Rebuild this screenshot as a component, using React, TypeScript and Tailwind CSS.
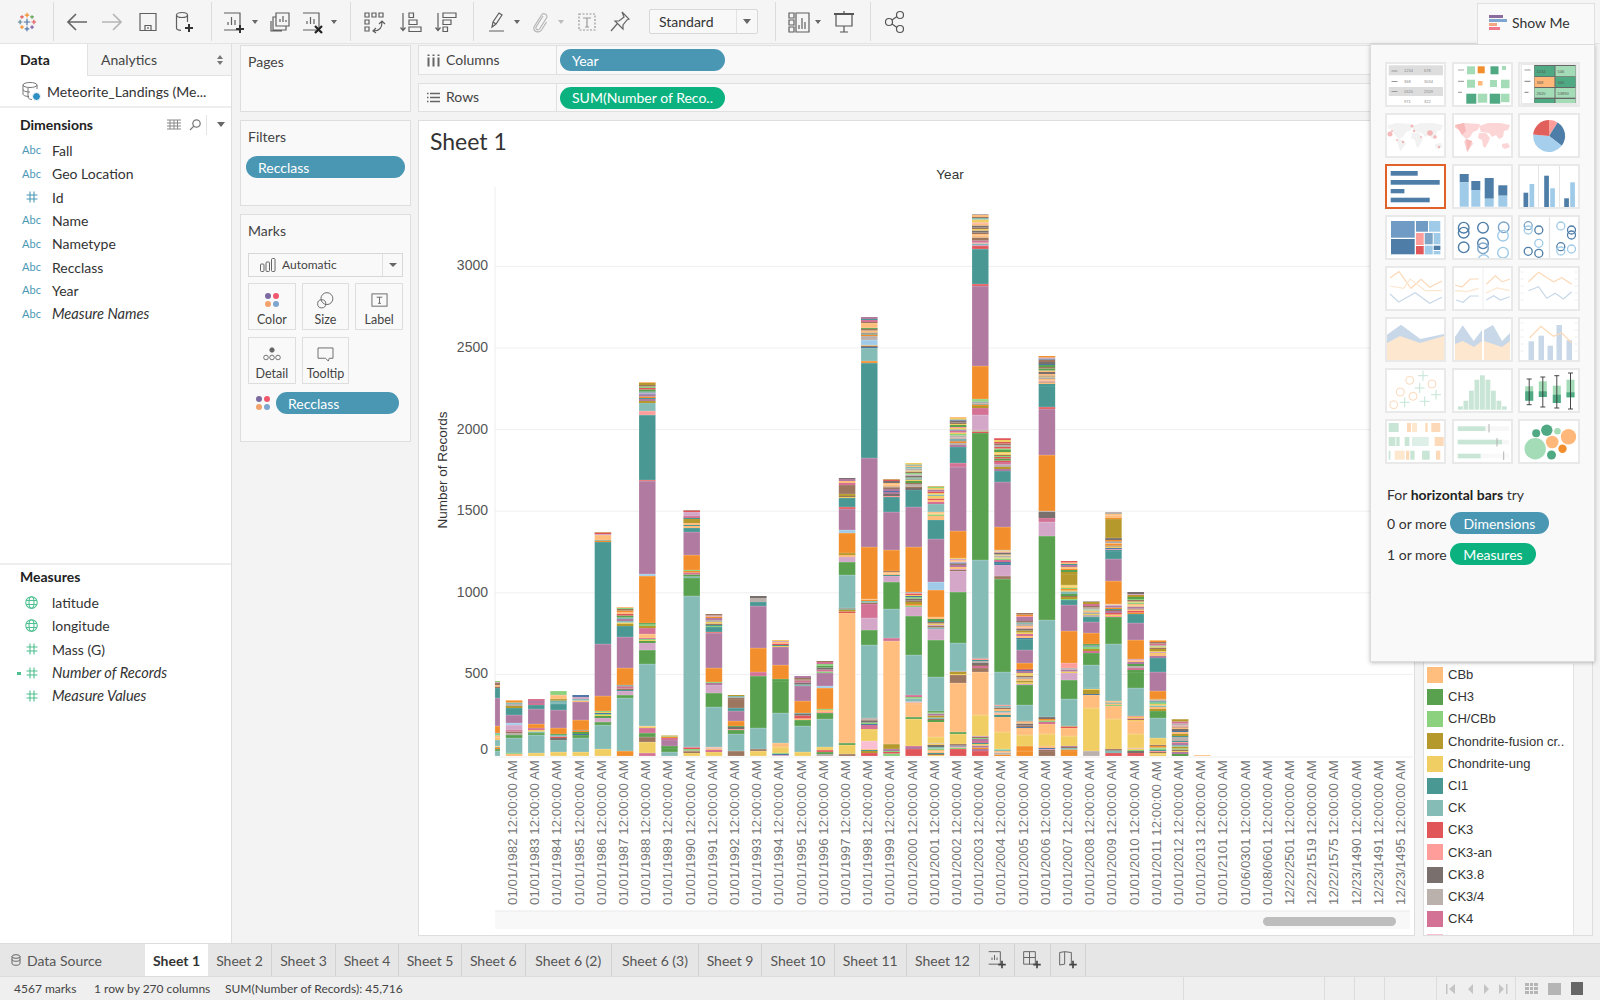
import type { ReactNode } from "react";

const COLORS: Record<string, string> = {
  T: "#499894", K: "#86bcb6", O: "#f28e2b", P: "#b07aa1", G: "#59a14f", L: "#ffbe7d", Y: "#f1ce63",
  B: "#9d7660", M: "#d37295", H: "#d4a6c8", R: "#e15759", S: "#ff9d9a", V: "#b6992d", N: "#8cd17d",
  A: "#a0cbe8", D: "#4e79a7", W: "#79706e", Q: "#bab0ac", I: "#fabfd2",
};
const NOISE = "YLGBRMDNQTOVSKPHYLNBW";

// one bar per column, bottom to top: colour key + height in px, x = thin mixed stripes
const BARS = [
  "K5 G2 x2 Y1 K6 x7 O7 P28 T10 x7",
  "x3 K15 G3 x5 H5 A2 P8 T7 x8",
  "Y3 K18 G2 x5 O4 P15 T4 x6",
  "Y4 K12 x6 O6 P18 T6 x5 L4 N4",
  "Y4 K14 G3 x5 O10 P18 x7",
  "Y7 K24 G3 H4 x7 O15 P52 T102 x2 L5 x3",
  "O5 K53 G3 H4 x6 O17 P31 T11 x19",
  "M3 Y11 B5 G4 M5 x2 K62 G14 H7 x5 L4 M6 x5 O47 A2 P93 R1 T65 S4 K8 x21",
  "K4 G4 x2 P6 x5",
  "Y3 x6 K151 G18 x8 O15 P23 T4 x12 H4 x2",
  "Y4 x5 K40 G14 H8 x3 O14 P35 R1 T5 x13",
  "B5 K17 G4 x4 O5 P10 T3 B9 x4",
  "Y5 B2 K21 G52 M4 O24 P42 T4 x6",
  "x3 Y6 L4 K30 G32 x2 O14 P18 x7",
  "Y4 K26 G6 x7 O12 P15 x10",
  "x4 R2 Y3 K28 G6 x4 O21 A2 P13 x12",
  "B2 Y9 G2 L130 x5 K33 G13 H5 x4 O20 A3 P21 R2 T9 x4 B9 x7",
  "R3 x4 I8 Y11 x12 K73 G15 H12 M14 x5 O52 P89 T95 O2 K13 x3 A5 Q4 x8 L5 x6",
  "x7 V5 L103 M3 K29 G27 H6 x5 O21 P38 T15 x18",
  "R7 x3 Y27 G2 L13 x9 K40 G39 H9 x15 O45 P40 T17 x27",
  "x13 Y6 L15 x11 K34 G37 H11 x12 O27 A8 P43 T19 x8 K8 x18",
  "R7 x5 Y10 G2 L49 B8 x4 K28 G51 H21 x13 O27 P64 M4 T16 x30",
  "R5 x15 Y21 L43 B4 x10 K98 G127 x3 H15 M7 x7 N2 O33 P80 R2 T35 R3 x32",
  "x7 Y17 L15 x12 K33 G93 B3 H11 x15 O23 P45 T11 x33",
  "O5 O5 Y11 L5 x9 K16 G20 x16 O6 P13 T11 x26",
  "B5 x5 Y12 L10 x7 K97 G84 H14 M4 x7 O56 P46 R2 T21 x30",
  "O5 x5 Y10 L8 x2 K27 G19 H7 x5 S5 O32 P26 T5 x15 V11 x13",
  "Q5 Y43 L13 x7 K23 G12 x9 O11 P11 T5 x16",
  "R3 x4 Y30 L13 x5 K57 G27 x13 O23 P22 T8 x13 V19 x7",
  "R3 x5 Y14 L13 x5 K28 G16 x13 O19 P17 T9 x22",
  "x11 Y7 K20 G7 x12 O8 P19 T14 x18",
  "x37",
  "L1",
];

const COLUMN_LABELS = [
  ...Array.from({ length: 32 }, (_, i) => `01/01/${1982 + i}`),
  "01/01/2101", "01/06/0301", "01/08/0601", "12/22/2501", "12/22/1519", "12/22/1575", "12/23/1490", "12/23/1491", "12/23/1495",
];

function Bar({ spec, index }: { spec: string; index: number }) {
  // first entry is the column cut off by the left edge of the scrolled view
  const x = index === 0 ? 495 : 505.8 + 22.2 * (index - 1);
  const w = index === 0 ? 5 : 16.6;
  let y = 756;
  let seed = index * 37 + 11;
  const rects: ReactNode[] = [];
  spec.split(" ").forEach((tok, t) => {
    const key = tok[0];
    const h = Number(tok.slice(1));
    if (key === "x") {
      let left = h;
      let n = 0;
      while (left > 0) {
        seed = (seed * 7919 + 13) % 10007;
        const sh = Math.min(left, 1 + (seed % 3) * 0.5);
        y -= sh;
        left -= sh;
        rects.push(<rect key={`${t}-${n++}`} x={x} y={y} width={w} height={sh} fill={COLORS[NOISE[seed % NOISE.length]]} />);
      }
    } else {
      y -= h;
      rects.push(<rect key={t} x={x} y={y} width={w} height={h} fill={COLORS[key]} stroke="#fff" strokeOpacity={0.35} strokeWidth={0.5} />);
    }
  });
  return <g>{rects}</g>;
}

function Chart() {
  const ticks = [0, 500, 1000, 1500, 2000, 2500, 3000];
  return (
    <svg viewBox="419 121 995 814" className="w-[995px] h-[814px] block absolute left-0 top-0">
      <text x="950" y="179" textAnchor="middle" fontSize="13.5" fill="#333" fontFamily="Liberation Sans, sans-serif">Year</text>
      <line x1="495" y1="187" x2="495" y2="756" stroke="#eeeeee" />
      {ticks.map((t) => {
        const y = 756 - t * 0.1632;
        return (
          <g key={t}>
            {t > 0 && <line x1="495" y1={y} x2="1413" y2={y} stroke="#efefef" />}
            <text x="488" y={y + 4 - (t === 0 ? 6 : 0)} textAnchor="end" fontSize="14" fill="#555" fontFamily="Liberation Sans, sans-serif">{t}</text>
          </g>
        );
      })}
      <text transform="rotate(-90 447 470)" x="447" y="470" textAnchor="middle" fontSize="13.5" fill="#333" fontFamily="Liberation Sans, sans-serif">Number of Records</text>
      {BARS.map((spec, i) => <Bar key={i} spec={spec} index={i} />)}
      <line x1="495" y1="757" x2="1413" y2="757" stroke="#eeeeee" />
      {COLUMN_LABELS.map((label, i) => {
        const x = 517 + 22.2 * i;
        return (
          <text key={i} transform={`rotate(-90 ${x} 905)`} x={x} y="905" fontSize="13.3" fill="#777" fontFamily="Liberation Sans, sans-serif">
            {label} 12:00:00 AM
          </text>
        );
      })}
      <rect x="495" y="911" width="915" height="18" fill="#f8f8f8" />
      <line x1="495" y1="911" x2="1410" y2="911" stroke="#eaeaea" />
      <rect x="1263" y="917" width="133" height="9" rx="4.5" fill="#bdbdbd" />
    </svg>
  );
}

function Ico({ children, className = "w-[24px] h-[24px]", stroke = "#5f5f5f" }: { children: ReactNode; className?: string; stroke?: string }) {
  return (
    <svg viewBox="0 0 24 24" className={`${className} block shrink-0`} fill="none" stroke={stroke} strokeWidth="1.2">
      {children}
    </svg>
  );
}

function Sep({ className }: { className: string }) {
  return <div className={`w-px h-[39px] bg-[#dcdcdc] shrink-0 ${className}`} />;
}

function Caret({ className }: { className: string }) {
  return (
    <div className={`w-[10px] flex justify-center shrink-0 ${className}`}>
      <div className="w-0 h-0 border-l-[3.5px] border-r-[3.5px] border-t-[4px] border-l-transparent border-r-transparent border-t-[#666]" />
    </div>
  );
}

function Logo() {
  const crosses: [number, number, string, number][] = [
    [12, 12, "#4e79a7", 3.5], [12, 4.5, "#f28e2b", 2.5], [12, 19.5, "#4e79a7", 2.5], [4.5, 12, "#59879b", 2.5], [19.5, 12, "#e15759", 2.5],
    [6.5, 6.5, "#e15759", 2], [17.5, 6.5, "#59a14f", 2], [6.5, 17.5, "#f28e2b", 2], [17.5, 17.5, "#7b5ea7", 2],
  ];
  return (
    <svg viewBox="0 0 24 24" className="w-[22px] h-[22px] block">
      {crosses.map(([x, y, c, r], i) => (
        <path key={i} d={`M${x - r} ${y}H${x + r}M${x} ${y - r}V${y + r}`} stroke={c} strokeWidth="1.3" />
      ))}
    </svg>
  );
}

function Toolbar() {
  return (
    <div className="h-[44px] shrink-0 flex items-center bg-[#f5f5f5] border-b border-[#e4e4e4] relative">
      <div className="w-[53px] flex justify-center shrink-0"><Logo /></div>
      <Sep className="" />
      <div className="ml-[11px]"><Ico stroke="#666"><path strokeWidth="1.7" d="M22 12H3M11 4l-8 8 8 8" /></Ico></div>
      <div className="ml-[11px]"><Ico stroke="#b5b5b5"><path strokeWidth="1.7" d="M2 12h19M13 4l8 8-8 8" /></Ico></div>
      <div className="ml-[12px]"><Ico><path d="M4 3.5h16v17H4zM9 20.5v-5h6v5M12 17v2" /></Ico></div>
      <div className="ml-[12px]"><Ico><ellipse cx="10" cy="5" rx="5.5" ry="2.5" /><path d="M4.5 5v13c0 1.2 2 2.2 4.5 2.4M15.500 5v7" /><path stroke="#333" strokeWidth="2" d="M17 14v8M13 18h8" /></Ico></div>
      <Sep className="ml-[15px]" />
      <div className="ml-[9px]"><Ico><path d="M3 3h16v17H3M7 15v-3M10.500 15V7M14 15v-5" /><path stroke="#333" strokeWidth="2" d="M19 15v8M15 19h8" /></Ico></div>
      <Caret className="ml-[5px]" />
      <div className="ml-[8px]"><Ico><path d="M8 3h13v13H8zM12 12V9M15 12V6M18 12v-2M8 7H5v13h13v-4M3 11v10h11" /></Ico></div>
      <div className="ml-[8px]"><Ico><path d="M3 3h16v17H3M7 14v-3M10.500 14V7M14 14v-5" /><path stroke="#222" strokeWidth="2.2" d="M15 16l7 7M22 16l-7 7" /></Ico></div>
      <Caret className="ml-[5px]" />
      <Sep className="ml-[11px]" />
      <div className="ml-[11px]"><Ico><path d="M3 3h4v4H3zM10 3h4v4h-4zM17 3h4v4h-4zM3 10h4v4H3zM3 17h4v4H3zM12 21c5 0 8-3 8-9M17 14l3-3 3 3M14 18l-3 3 3 2" /></Ico></div>
      <div className="ml-[13px]"><Ico><path d="M4 3v17M1.500 17.500L4 20.500l2.500-3M10 3h4.500v4.500H10zM10 10h8v4.500h-8zM10 17h12v4.500H10z" /></Ico></div>
      <div className="ml-[11px]"><Ico><path d="M4 3v17M1.500 17.500L4 20.500l2.500-3M9 3h13v4.500H9zM9 10h8v4.500H9zM9 17h4.500v4.500H9z" /></Ico></div>
      <Sep className="ml-[15px]" />
      <div className="ml-[11px]"><Ico><path d="M7 17l1-5 6-9 3 2-6 9-4 3zM8 12l3 2M4 21h15" /></Ico></div>
      <Caret className="ml-[3px]" />
      <div className="ml-[6px]"><Ico stroke="#b5b5b5"><path d="M15 6l-7 11c-1 2 2 4 3.500 2l7-11c2-3-3-6-5-3l-7 11c-3 5 4 8 7 4l5-8" /></Ico></div>
      <Caret className="ml-[4px] opacity-40" />
      <div className="ml-[9px]"><Ico stroke="#999"><path strokeDasharray="2 1.500" d="M4 4h16v16H4z" /><path d="M8 8h8M12 8v9M10 17h4" /></Ico></div>
      <div className="ml-[9px]"><Ico stroke="#666"><path d="M14 2l7 7-2 1-4 5 0 4-8-8 4 0 5-4zM9 14l-6 7" /></Ico></div>
      <div className="ml-[17px] w-[109px] h-[25px] shrink-0 flex items-center bg-[#f8f8f8] border border-[#d8d8d8] rounded-[2px]">
        <span className="pl-[9px] flex-1 text-[14px] text-[#333]">Standard</span>
        <div className="w-[21px] h-full border-l border-[#e2e2e2] flex items-center justify-center">
          <div className="w-0 h-0 border-l-[4px] border-r-[4px] border-t-[5px] border-l-transparent border-r-transparent border-t-[#666]" />
        </div>
      </div>
      <Sep className="ml-[17px]" />
      <div className="ml-[11px]"><Ico><path d="M2 3h5v5H2zM2 10h5v5H2zM2 17h5v5H2zM9 3h13v19H9zM12 19v-4M15 19V8M18 19v-7" /></Ico></div>
      <Caret className="ml-[2px]" />
      <div className="ml-[9px]"><Ico stroke="#555"><path strokeWidth="2" d="M2 4h20" /><path d="M4 4v12h16V4M12 1v3M12 16v6M8 22h8" /></Ico></div>
      <Sep className="ml-[14px]" />
      <div className="ml-[12px]"><Ico stroke="#555"><circle cx="6" cy="12" r="3.5" /><circle cx="17" cy="5" r="3.5" /><circle cx="17" cy="19" r="3.5" /><path d="M9 10l5-3.500M9 14l5 3.500" /></Ico></div>
      <div className="ml-auto mr-[5px] w-[118px] h-[41px] self-end -mb-px z-20 flex items-center bg-[#f9f9f9] border border-[#e0e0e0] border-b-0 pl-[11px] pb-[4px]">
        <div className="flex flex-col w-[18px] shrink-0">
          <div className="h-[3px] w-[14px] bg-[#8a6d9e]" />
          <div className="h-[3px] mt-px w-[18px] bg-[#7ea6d0]" />
          <div className="h-[3px] mt-px w-[8px] bg-[#f4a582]" />
          <div className="h-[3px] mt-px w-[11px] bg-[#f0788a]" />
        </div>
        <span className="ml-[5px] text-[14px] text-[#333]">Show Me</span>
      </div>
    </div>
  );
}

function HashIcon({ color }: { color: string }) {
  return (
    <svg viewBox="0 0 12 12" className="w-[12px] h-[12px] block">
      <path d="M4 0.500V11.500M8 0.500V11.500M0.500 4H11.500M0.500 8H11.500" stroke={color} strokeWidth="1.1" fill="none" />
    </svg>
  );
}

function GlobeIcon() {
  return (
    <svg viewBox="0 0 12 12" className="w-[13px] h-[13px] block" fill="none" stroke="#4ebf90" strokeWidth="1">
      <circle cx="6" cy="6" r="5.300" />
      <ellipse cx="6" cy="6" rx="2.300" ry="5.300" />
      <path d="M1 4.200h10M1 7.800h10" />
    </svg>
  );
}

function Field({ icon, label, italic }: { icon: ReactNode; label: string; italic?: boolean }) {
  return (
    <div className="h-[23.330px] flex items-center">
      <div className="w-[52px] pl-[23px] pr-[12px] flex justify-center shrink-0">{icon}</div>
      <span className={`text-[#333] ${italic ? "italic text-[14.600px]" : "text-[14px]"}`}>{label}</span>
    </div>
  );
}

function DataPane() {
  const abc = <span className="text-[11px] text-[#4a97b4]">Abc</span>;
  const dimHash = <HashIcon color="#4a97b4" />;
  const green = <HashIcon color="#4ebf90" />;
  return (
    <div className="w-[232px] shrink-0 bg-white border-r border-[#dedede] flex flex-col">
      <div className="h-[32px] flex shrink-0">
        <div className="w-[87px] flex items-center pl-[20px] pb-[2px] text-[14px] font-bold text-[#222]">Data</div>
        <div className="flex-1 flex items-center justify-between bg-[#f5f5f5] border-l border-b border-[#e2e2e2] pl-[13px] pr-[8px] text-[14px] text-[#444]">
          Analytics
          <span className="flex flex-col gap-[2px]">
            <span className="w-0 h-0 border-l-[3px] border-r-[3px] border-b-[4px] border-l-transparent border-r-transparent border-b-[#777]" />
            <span className="w-0 h-0 border-l-[3px] border-r-[3px] border-t-[4px] border-l-transparent border-r-transparent border-t-[#777]" />
          </span>
        </div>
      </div>
      <div className="h-[32px] shrink-0 flex items-center border-b-2 border-[#eeeeee] pl-[21px]">
        <div className="relative w-[20px] h-[20px] shrink-0">
          <svg viewBox="0 0 20 20" className="w-[20px] h-[20px] block" fill="none" stroke="#777" strokeWidth="1">
            <ellipse cx="9" cy="4" rx="7" ry="2.500" />
            <path d="M2 4v9c0 1.500 3 2.500 6 2.500M16 4v4M2 8.500c0 1.500 3 2.500 7 2.500M7 7v9c0 1.500 2 2.500 4 2.500" />
          </svg>
          <div className="absolute right-0 bottom-0 w-[9px] h-[9px] rounded-full bg-[#2f8fc2] border border-white" />
        </div>
        <span className="ml-[6px] text-[14px] text-[#333] whitespace-nowrap">Meteorite_Landings (Me...</span>
      </div>
      <div className="flex-1 flex flex-col min-h-0">
        <div className="h-[31px] pt-[2px] shrink-0 flex items-center pl-[20px]">
          <span className="text-[14px] font-bold text-[#222]">Dimensions</span>
          <svg viewBox="0 0 14 11" className="w-[14px] h-[11px] block ml-auto" fill="none" stroke="#888" strokeWidth="1">
            <path d="M0 1h14M0 4h14M0 7h14M0 10h14M3 1v9M7 1v9M10.500 1v9" />
          </svg>
          <svg viewBox="0 0 12 12" className="w-[12px] h-[12px] block ml-[8px]" fill="none" stroke="#777" strokeWidth="1.200">
            <circle cx="7.500" cy="4.500" r="3.700" /><path d="M4.800 7.200L1 11" />
          </svg>
          <div className="w-px h-[20px] bg-[#e4e4e4] ml-[5px]" />
          <div className="ml-[10px] mr-[6px] w-0 h-0 border-l-[4px] border-r-[4px] border-t-[5px] border-l-transparent border-r-transparent border-t-[#666]" />
        </div>
        <Field icon={abc} label="Fall" />
        <Field icon={abc} label="Geo Location" />
        <Field icon={dimHash} label="Id" />
        <Field icon={abc} label="Name" />
        <Field icon={abc} label="Nametype" />
        <Field icon={abc} label="Recclass" />
        <Field icon={abc} label="Year" />
        <Field icon={abc} label="Measure Names" italic />
      </div>
      <div className="h-[380px] shrink-0 border-t-2 border-[#eeeeee]">
        <div className="h-[26px] pb-[4px] flex items-center pl-[20px] text-[14px] font-bold text-[#222]">Measures</div>
        <Field icon={<GlobeIcon />} label="latitude" />
        <Field icon={<GlobeIcon />} label="longitude" />
        <Field icon={green} label="Mass (G)" />
        <Field icon={<div className="relative"><div className="absolute -left-[9px] top-[5px] w-[4px] border-t-2 border-b border-[#4ebf90] h-[3px]" />{green}</div>} label="Number of Records" italic />
        <Field icon={green} label="Measure Values" italic />
      </div>
    </div>
  );
}

function Pill({ label, className }: { label: string; className: string }) {
  return <div className={`h-[22px] rounded-[11px] flex items-center text-[14px] text-white whitespace-nowrap ${className}`}>{label}</div>;
}

function ColorDots({ size }: { size: string }) {
  return (
    <div className={`grid grid-cols-2 gap-[1.500px] ${size}`}>
      <div className="rounded-full bg-[#7b6aa0]" />
      <div className="rounded-full bg-[#f0586e]" />
      <div className="rounded-full bg-[#f2a36b]" />
      <div className="rounded-full bg-[#7ea6d0]" />
    </div>
  );
}

function MarkButton({ icon, label }: { icon: ReactNode; label: string }) {
  return (
    <div className="h-[47px] border border-[#dedede] bg-[#f9f9f9] flex flex-col items-center justify-between pt-[7px] pb-[2px] text-[12.500px] leading-[14px] text-[#444]">
      <div className="h-[18px] flex items-center">{icon}</div>
      <span>{label}</span>
    </div>
  );
}

function CardsColumn() {
  return (
    <div className="w-[171px] ml-[8px] shrink-0 flex flex-col gap-[8px] pt-px">
      <div className="h-[67px] border border-[#dedede] bg-[#f9f9f9] pl-[7px] pt-[5px] text-[14px] text-[#444]">Pages</div>
      <div className="h-[86px] border border-[#dedede] bg-[#f9f9f9] text-[14px] text-[#444]">
        <div className="pl-[7px] pt-[5px]">Filters</div>
        <Pill label="Recclass" className="mt-[9px] mx-[5px] pl-[12px] bg-[#4a97b4]" />
      </div>
      <div className="h-[228px] border border-[#dedede] bg-[#f9f9f9] text-[14px] text-[#444] px-[7px]">
        <div className="pt-[5px]">Marks</div>
        <div className="mt-[12px] h-[24px] border border-[#d8d8d8] flex items-center bg-[#f9f9f9]">
          <svg viewBox="0 0 16 14" className="w-[16px] h-[14px] block ml-[11px]" fill="none" stroke="#666" strokeWidth="1">
            <rect x="0.500" y="6" width="3.500" height="7.500" rx="1" /><rect x="6" y="4" width="3.500" height="9.500" rx="1" /><rect x="11.500" y="0.500" width="3.500" height="13" rx="1" />
          </svg>
          <span className="ml-[6px] text-[12px] text-[#444] flex-1">Automatic</span>
          <div className="w-[20px] h-full border-l border-[#e0e0e0] flex items-center justify-center">
            <div className="w-0 h-0 border-l-[4px] border-r-[4px] border-t-[4px] border-l-transparent border-r-transparent border-t-[#666]" />
          </div>
        </div>
        <div className="mt-[6px] grid grid-cols-3 gap-x-[6px] gap-y-[7px]">
          <MarkButton icon={<ColorDots size="w-[14px] h-[14px]" />} label="Color" />
          <MarkButton
            icon={<svg viewBox="0 0 18 18" className="w-[17px] h-[17px] block" fill="none" stroke="#666" strokeWidth="1"><circle cx="10.500" cy="7" r="6.300" /><circle cx="5" cy="12.500" r="4.300" /></svg>}
            label="Size"
          />
          <MarkButton
            icon={<svg viewBox="0 0 18 18" className="w-[17px] h-[17px] block" fill="none" stroke="#666" strokeWidth="1"><rect x="1" y="2" width="16" height="13" /><path d="M6 5.500h6M9 5.500v6.500M7.500 12h3" /></svg>}
            label="Label"
          />
          <MarkButton
            icon={<svg viewBox="0 0 18 14" className="w-[18px] h-[14px] block" fill="none" stroke="#666" strokeWidth="0.900"><circle cx="9" cy="3" r="2.200" fill="#666" /><circle cx="3" cy="10.500" r="2.300" /><circle cx="9" cy="10.500" r="2.300" /><circle cx="15" cy="10.500" r="2.300" /></svg>}
            label="Detail"
          />
          <MarkButton
            icon={<svg viewBox="0 0 18 16" className="w-[17px] h-[15px] block" fill="none" stroke="#666" strokeWidth="1"><path d="M1 1h16v11h-4l-1 3-3-3H1z" /></svg>}
            label="Tooltip"
          />
        </div>
        <div className="mt-[8px] flex items-center pl-[8px]">
          <ColorDots size="w-[14px] h-[14px]" />
          <Pill label="Recclass" className="ml-[6px] w-[123px] pl-[12px] bg-[#4a97b4]" />
        </div>
      </div>
    </div>
  );
}

function Legend() {
  const rows: [string, string][] = [
    ["CBb", "#ffbe7d"], ["CH3", "#59a14f"], ["CH/CBb", "#8cd17d"], ["Chondrite-fusion cr..", "#b6992d"], ["Chondrite-ung", "#f1ce63"],
    ["CI1", "#499894"], ["CK", "#86bcb6"], ["CK3", "#e15759"], ["CK3-an", "#ff9d9a"], ["CK3.8", "#79706e"], ["CK3/4", "#bab0ac"], ["CK4", "#d37295"],
  ];
  return (
    <div className="w-[170px] shrink-0 border border-[#dedede] bg-[#f6f6f6] flex justify-end flex-col overflow-hidden font-['Liberation_Sans',sans-serif]">
      <div className="w-[150px] bg-white border-r border-[#e4e4e4] pl-[3px] -mb-[2px]">
        {rows.map(([name, c]) => (
          <div key={name} className="h-[22.200px] flex items-center text-[13px] text-[#333] whitespace-nowrap">
            <LegendSwatch color={c} />
            <span className="ml-[5px]">{name}</span>
          </div>
        ))}
        <div className="mt-[4px] w-[16px] h-[3px] bg-[#fabfd2]" />
      </div>
    </div>
  );
}

function LegendSwatch({ color }: { color: string }) {
  return (
    <svg viewBox="0 0 16 16" className="w-[16px] h-[16px] block shrink-0">
      <rect width="16" height="16" fill={color} />
    </svg>
  );
}

function Shelf({ icon, label, pill, className }: { icon: ReactNode; label: string; pill: string; className: string }) {
  return (
    <div className={`flex items-stretch bg-[#f9f9f9] border border-[#e0e0e0] ${className}`}>
      <div className="w-[138px] shrink-0 border-r border-[#e0e0e0] flex items-center pl-[8px] text-[14px] text-[#444]">
        <div className="w-[19px]">{icon}</div>
        <span className="pb-[2px]">{label}</span>
      </div>
      <div className="flex items-center pl-[3px]">{pill === "Year"
        ? <Pill label="Year" className="w-[165px] pl-[12px] bg-[#4a97b4]" />
        : <Pill label={pill} className="w-[165px] pl-[12px] bg-[#0bb27f]" />}</div>
    </div>
  );
}

function Center() {
  return (
    <div className="w-[1175px] ml-[7px] shrink-0 flex flex-col gap-[8px] pt-px">
      <Shelf
        className="h-[30px]"
        label="Columns"
        pill="Year"
        icon={<svg viewBox="0 0 13 13" className="w-[13px] h-[13px] block"><path d="M1.500 3.500V12.500M6.500 3.500V12.500M11.500 3.500V12.500" stroke="#666" strokeWidth="2" /><path d="M1.500 0.500v1.500M6.500 0.500v1.500M11.500 0.500v1.500" stroke="#666" strokeWidth="2" /></svg>}
      />
      <Shelf
        className="h-[29px]"
        label="Rows"
        pill="SUM(Number of Reco.."
        icon={<svg viewBox="0 0 13 13" className="w-[13px] h-[13px] block"><path d="M3 2.500H13M3 6.500H13M3 10.500H13M0 2.500h1.500M0 6.500h1.500M0 10.500h1.500" stroke="#666" strokeWidth="1.500" /></svg>}
      />
      <div className="h-[816px] flex gap-[8px]">
        <div className="w-[997px] shrink-0 relative bg-white border border-[#dedede] overflow-hidden">
          <div className="pl-[11px] pt-[4px] text-[23px] leading-[32px] text-[#333] relative z-10">Sheet 1</div>
          <Chart />
        </div>
        <Legend />
      </div>
    </div>
  );
}

/* ---------- Show Me thumbnails, coords in a 61x45 box ---------- */
const DK = "#4fa983";
const LT = "#a5dcb8";
const BL = "#4e7ea8";
const LB = "#a0cbe8";
const OP = "#fcd9b8";
const OQ = "#fde7cf";
const BQ = "#c8d8e8";
const GP = "#c9e5d6";

function World({ fill }: { fill: string }) {
  return <path fill={fill} d="M3 12L12 10L28 11L26 17L21 19L18 24L14 26L10 22L7 17L3 15ZM14 26L20 28L21 31L17 36L15 39L14 34L12 29ZM27 13L36 10L48 10L58 12L56 17L52 18L51 24L47 26L44 22L40 24L37 20L29 19ZM27 20L34 20L38 25L36 30L33 35L31 33L30 27L26 25ZM50 31L56 30L58 34L53 36L50 34Z" />;
}

function Lines({ pts, color }: { pts: string; color: string }) {
  return <polyline points={pts} fill="none" stroke={color} strokeWidth="1.200" />;
}

function pieSlice(a0: number, a1: number, color: string) {
  const rad = (a: number) => ((a - 90) * Math.PI) / 180;
  const [cx, cy, r] = [30.6, 23, 16];
  const large = a1 - a0 > 180 ? 1 : 0;
  const d = `M${cx} ${cy}L${cx + r * Math.cos(rad(a0))} ${cy + r * Math.sin(rad(a0))}A${r} ${r} 0 ${large} 1 ${cx + r * Math.cos(rad(a1))} ${cy + r * Math.sin(rad(a1))}Z`;
  return <path d={d} fill={color} />;
}

const tinyTxt = { fontSize: 4, fill: "#888", fontFamily: "Liberation Sans, sans-serif" };

const THUMBS: ReactNode[] = [
  <g key="t1">
    <rect x="3.700" y="3.300" width="54.300" height="10" fill="#dddddd" />
    <rect x="3.700" y="25" width="54.300" height="9" fill="#dddddd" />
    <path d="M6.500 9h6M6.500 19.500h6M6.500 29.500h6" stroke="#999" strokeWidth="1.200" />
    <text x="19" y="10" {...tinyTxt}>1234</text><text x="39" y="10" {...tinyTxt}>678</text>
    <text x="19" y="20.500" {...tinyTxt}>368</text><text x="39" y="20.500" {...tinyTxt}>3034</text>
    <text x="19" y="31" {...tinyTxt}>2620</text><text x="39" y="31" {...tinyTxt}>2559</text>
    <text x="19" y="40.500" {...tinyTxt}>971</text><text x="39" y="40.500" {...tinyTxt}>322</text>
  </g>,
  <g key="t2">
    <path d="M6 8h6M6 19.300h6M6 30.300h4" stroke="#aaa" strokeWidth="1.200" />
    <rect x="15" y="4.300" width="8" height="8" fill={LT} /><rect x="25.700" y="4.300" width="7" height="7" fill="#f28e2b" /><rect x="38.500" y="4.300" width="8" height="8" fill={DK} /><rect x="50" y="4" width="4" height="4" fill={LT} />
    <rect x="15" y="17.700" width="8" height="8" fill={LT} /><rect x="26" y="19" width="4.500" height="4.500" fill="#ffb879" /><rect x="38" y="18" width="7" height="7" fill={LT} /><rect x="49" y="17.700" width="8.500" height="8.500" fill={LT} />
    <rect x="14.300" y="31.700" width="10" height="10" fill={DK} /><rect x="25.700" y="31.700" width="9.500" height="9" fill={LT} /><rect x="37.700" y="31.700" width="10.500" height="10" fill={DK} /><rect x="49" y="31.700" width="8.500" height="8.500" fill={LT} />
  </g>,
  <g key="t3">
    <rect x="2" y="2" width="57" height="41" fill="#e8e8e8" /><rect x="3.500" y="3" width="12" height="38" fill="#fff" />
    <path d="M6 8h6M6 19.300h6M6 30.300h4" stroke="#999" strokeWidth="1.200" />
    <rect x="15.700" y="3" width="41.500" height="38" fill="#666" />
    <rect x="16" y="4" width="20" height="10.300" fill={DK} /><rect x="37" y="4" width="20" height="10.300" fill={LT} />
    <rect x="16" y="15" width="20" height="10" fill="#ffb879" /><rect x="37" y="15" width="20" height="10" fill={DK} />
    <rect x="16" y="26" width="20" height="9.700" fill={LT} /><rect x="37" y="26" width="20" height="9.700" fill={LT} />
    <rect x="16" y="37" width="20" height="4" fill={DK} /><rect x="37" y="37" width="20" height="4" fill={LT} />
    <text x="18" y="10.500" {...tinyTxt} fill="#555">1234</text><text x="39" y="10.500" {...tinyTxt} fill="#555">546</text>
    <text x="18" y="21.500" {...tinyTxt} fill="#555">368</text><text x="39" y="21.500" {...tinyTxt} fill="#555">340</text>
    <text x="18" y="32.500" {...tinyTxt} fill="#555">2620</text><text x="39" y="32.500" {...tinyTxt} fill="#555">53890</text>
  </g>,
  <g key="t4">
    <World fill="#f2f2f2" />
    {[[5, 21, 2.500], [7, 18, 1], [12, 27, 1], [18, 29, 1.200], [27, 13, 1.500], [29, 18, 1.200], [45, 20, 2.800], [50, 24, 1.800], [36, 24, 0.900], [54, 34, 1.200]].map(([x, y, r], i) => (
      <circle key={i} cx={x} cy={y} r={r} fill="#f3a8a8" fillOpacity={0.8} />
    ))}
  </g>,
  <g key="t5"><World fill="#fcd6d6" /><path fill="#f8b9b9" d="M3 12L12 10L14 18L10 22L7 17ZM14 26L20 28L17 36L15 39Z" /></g>,
  <g key="t6">{pieSlice(0, 32, "#ff9d9a")}{pieSlice(32, 128, "#4e7ea8")}{pieSlice(128, 275, "#a6cfee")}{pieSlice(275, 360, "#e1605c")}</g>,
  <g key="t7" fill={BL}>
    <rect x="5.700" y="7" width="27" height="4.700" /><rect x="5.700" y="16" width="49" height="4.700" /><rect x="5.700" y="25" width="13.700" height="4.300" /><rect x="5.700" y="33.700" width="39" height="4.600" />
  </g>,
  <g key="t8">
    {[[7.7, 10, 18.3], [19.3, 17, 26], [32.7, 14, 34.7], [46.3, 21.3, 31.7]].map(([x, t, m], i) => (
      <g key={i}><rect x={x} y={t} width="9" height={m - t} fill={BL} /><rect x={x} y={m} width="9" height={42.7 - m} fill={LB} /></g>
    ))}
  </g>,
  <g key="t9">
    <path d="M20 2V45M41 2V45" stroke="#e4e4e4" strokeWidth="1" />
    {[[5, 28.7, BL], [11, 20, LB], [25.7, 11.7, BL], [31.7, 24.3, LB], [45.7, 34.3, BL], [51.7, 18.3, LB]].map(([x, t, c], i) => (
      <rect key={i} x={x as number} y={t as number} width="4.700" height={45 - (t as number)} fill={c as string} />
    ))}
  </g>,
  <g key="t10">
    {[[6, 6, 23.7, 16.7, "#6f9bc4"], [6, 24, 23.7, 15.3, BL], [31, 6, 12, 10.7, "#6f9bc4"], [44, 6, 11.3, 10.7, LB], [31, 18, 7.7, 12, "#ff9d9a"], [31, 31, 7.7, 8.3, "#e15759"], [39.7, 18, 8, 11.3, "#7da5c8"], [48.7, 18, 6.7, 11.3, LB], [39.7, 30.7, 8, 8.7, LB], [48.7, 30.7, 6.7, 4.3, BL], [48.7, 36, 6.7, 3.3, LB]].map(([x, y, w, h, c], i) => (
      <rect key={i} x={x as number} y={y as number} width={w as number} height={h as number} fill={c as string} />
    ))}
  </g>,
  <g key="t11" fill="none" strokeWidth="1.400">
    {[[11.7, 12.7, BL], [11.7, 17.7, BL], [31, 12.7, BL], [11.7, 32.3, BL], [31, 28.3, BL], [31, 33.3, "#7da5c8"], [51.7, 12.3, "#7da5c8"], [51, 20.7, LB], [51, 37.7, LB], [31.7, 45, LB]].map(([x, y, c], i) => (
      <circle key={i} cx={x as number} cy={y as number} r="5.300" stroke={c as string} />
    ))}
  </g>,
  <g key="t12" fill="none" strokeWidth="1.300">
    <path d="M31 2V45" stroke="#e4e4e4" />
    {[[9.7, 10.7, "#7da5c8"], [9.7, 15, LB], [20.3, 15, BL], [20.3, 28.3, LB], [9.7, 36.3, BL], [20.3, 38.3, BL], [42.3, 11, LB], [53, 15, BL], [53, 20, BL], [42.3, 31.7, BL], [42.3, 36, LB], [53, 34, LB]].map(([x, y, c], i) => (
      <circle key={i} cx={x as number} cy={y as number} r="4" stroke={c as string} />
    ))}
  </g>,
  <g key="t13">
    <Lines color={OP} pts="5,12 14,5.700 26,22.300 36,13.300 44.700,21.300 57,15" />
    <Lines color={OQ} pts="5,20 18.700,22.300 25.300,13 40.300,24.700 57,24.700" />
    <Lines color={BQ} pts="5,28 13.700,36 30.300,26.700 44.700,37.300 57,31.300" />
  </g>,
  <g key="t14">
    <path d="M31 2V45" stroke="#eeeeee" />
    <Lines color={OP} pts="3,19 10,21 18.300,13 26.700,13" /><Lines color={OQ} pts="3,24.700 15,25.700 26.700,22.300" /><Lines color={BQ} pts="4,34 11,36.300 18.300,30 26.700,30" />
    <Lines color={OP} pts="34.300,18.300 43.300,9.700 50,15.700 57.700,13.300" /><Lines color={OQ} pts="34,27 45,22 57.700,24.700" /><Lines color={BQ} pts="34.300,34 41.700,29.700 48.300,34 57.700,30.700" />
  </g>,
  <g key="t15">
    <path d="M2 6h3M2 13h3M2 20h3M2 27h3M2 34h3M56 6h3M56 13h3M56 20h3M56 27h3M56 34h3" stroke="#eeeeee" />
    <Lines color={OP} pts="10,15.700 20,6.300 35,15.700 43.300,11.700 53.300,18.300" />
    <Lines color={BQ} pts="10,24.700 20,20.700 28.300,32.300 36.700,27.300 45,33 53.300,25.700" />
  </g>,
  <g key="t16">
    <path fill={BQ} d="M2 17.700L16 7.700L35.300 22L59 17V43H2Z" />
    <path fill={OQ} d="M2 26L15 19L35 26L59 19V43H2Z" />
  </g>,
  <g key="t17">
    <path fill={BQ} d="M3 20L10.700 8.300L21.700 24L30 13V43H3ZM32 13L41 8L50 24L58 16V43H32Z" />
    <path fill={OQ} d="M3 27L11 24L22 30L30 24V43H3ZM32 24L41 27L50 30L58 24V43H32Z" />
  </g>,
  <g key="t18">
    <path d="M2 6h3M2 13h3M2 20h3M2 27h3M2 34h3M56 6h3M56 13h3M56 20h3M56 27h3M56 34h3" stroke="#eeeeee" />
    {[[10, 24.3], [20, 18.7], [29, 28.7], [38, 8], [48, 23.3]].map(([x, t]) => <rect key={x} x={x} y={t} width="5.500" height={43 - t} fill={BQ} />)}
    <Lines color={OP} pts="11,21 22.300,9.300 35,19.300 43.300,16 53.300,26" />
  </g>,
  <g key="t19" fill="none" strokeWidth="1">
    {[[24.7, 12.3], [47, 16], [15.3, 24], [28, 28.3], [8.7, 36.700]].map(([x, y]) => <circle key={x} cx={x} cy={y} r="4" stroke={OP} />)}
    {[[38, 7.7], [34.7, 20], [51, 26.7], [39.7, 33.3], [19.7, 34.3]].map(([x, y]) => <path key={x} d={`M${x - 5} ${y}h10M${x} ${y - 5}v10`} stroke="#c4e5d6" />)}
  </g>,
  <g key="t20" fill={GP}>
    {[38.3, 32.7, 22.7, 11.7, 7.3, 11.7, 22.7, 32.7, 38.3].map((t, i) => <rect key={i} x={6 + 5.5 * i} y={t} width="4.800" height={41.7 - t} />)}
  </g>,
  <g key="t21">
    {[[10.7, 11, 36.7, 18.3, 32.7, 23.3], [24.3, 9, 39, 13.3, 29, 23.3], [38.3, 7.7, 40, 17.7, 35, 26.7], [52, 5, 41, 11.7, 29.3, 24.3]].map(([x, a, b, t, e, m], i) => (
      <g key={i}>
        <rect x={x - 4} y={t} width="8" height={e - t} fill={LT} />
        <rect x={x - 4} y={m} width="8" height={e - m} fill={DK} />
        <path d={`M${x} ${a}V${b}M${x - 2.500} ${a}h5M${x - 2.500} ${b}h5`} stroke="#333" strokeWidth="0.900" />
      </g>
    ))}
  </g>,
  <g key="t22">
    {[[3.7, 4, 10, 0], [22, 4, 4, 1], [27, 4, 5, 2], [40.3, 4, 2.3, 1], [46.3, 4, 9, 1], [3.7, 18, 6.7, 0], [11.3, 18, 3.3, 0], [19.7, 18, 4.7, 0], [27, 18, 16.7, 3], [49.7, 18, 9, 1], [3.7, 31.7, 1.7, 0], [9.7, 31.7, 10, 2], [21, 31.7, 3.3, 1], [25.3, 31.7, 4.3, 0], [37, 31.7, 7.7, 0], [51, 31.7, 4.3, 1]].map(([x, y, w, c], i) => (
      <rect key={i} x={x} y={y} width={w} height="9" fill={[GP, "#fcd9b8", OQ, "#ddefe6"][c]} />
    ))}
  </g>,
  <g key="t23">
    <rect x="33" y="7.300" width="24" height="4.700" fill="#f7f7f7" /><rect x="50" y="20.700" width="7" height="4.700" fill="#f7f7f7" /><rect x="29" y="34.700" width="28" height="4.700" fill="#f9f9f9" />
    <rect x="5.700" y="7.300" width="27.700" height="4.700" fill={GP} /><rect x="5.700" y="20.700" width="44.300" height="4.700" fill={GP} /><rect x="5.700" y="34.700" width="23" height="4.700" fill={GP} />
    <path d="M37 5v8.500M45 19v8.500M51.700 32.500v8.500" stroke="#aaa" strokeWidth="0.900" />
  </g>,
  <g key="t24">
    {[[16.7, 29.7, 10.7, LT], [17.7, 14.3, 4, DK], [28.3, 11.3, 5.7, DK], [39, 12.3, 3.3, LT], [50, 17.7, 7.7, "#ffb879"], [33.7, 23, 6.3, "#ffb879"], [44, 29.7, 4.2, "#f28e2b"], [33, 36, 4.5, DK]].map(([x, y, r, c], i) => (
      <circle key={i} cx={x as number} cy={y as number} r={r as number} fill={c as string} />
    ))}
  </g>,
];

function ShowMePanel() {
  return (
    <div className="absolute left-[1370px] top-[44px] w-[225px] h-[618px] z-10 bg-[#f9f9f9] border border-[#dcdcdc] shadow-[0_1px_4px_rgba(0,0,0,0.25)] pt-[17px] pl-[14px]">
      <div className="grid grid-cols-[61px_61px_62px] auto-rows-[45px] gap-x-[5.500px] gap-y-[6px]">
        {THUMBS.map((t, i) => (
          <div key={i} className={`bg-white border-2 overflow-hidden ${i === 6 ? "border-[#e0622a]" : "border-[#e9e9e9]"}`}>
            <svg viewBox="2 2 57 41" className="w-full h-full block">{t}</svg>
          </div>
        ))}
      </div>
      <div className="mt-[19px] pl-[2px] text-[14px] text-[#333]">
        <div className="h-[22px] flex items-center">For&nbsp;<b className="font-bold text-[#222]">horizontal bars</b>&nbsp;try</div>
        <div className="mt-[7px] flex items-center">
          <span className="w-[63px]">0 or more</span>
          <Pill label="Dimensions" className="w-[99px] justify-center bg-[#4a97b4]" />
        </div>
        <div className="mt-[9px] flex items-center">
          <span className="w-[63px]">1 or more</span>
          <Pill label="Measures" className="w-[86px] justify-center bg-[#0bb27f]" />
        </div>
      </div>
    </div>
  );
}

function SheetTabs() {
  const tabs: [string, string][] = [
    ["Sheet 2", "w-[64px]"], ["Sheet 3", "w-[64px]"], ["Sheet 4", "w-[63px]"], ["Sheet 5", "w-[63px]"], ["Sheet 6", "w-[63.500px]"],
    ["Sheet 6 (2)", "w-[86.500px]"], ["Sheet 6 (3)", "w-[87px]"], ["Sheet 9", "w-[63px]"], ["Sheet 10", "w-[73px]"], ["Sheet 11", "w-[71.500px]"], ["Sheet 12", "w-[73px]"],
  ];
  return (
    <div className="h-[34px] shrink-0 flex bg-[#e6e6e6] border-y border-[#dcdcdc] text-[14px] text-[#555]">
      <div className="w-[145px] flex items-center pl-[11px]">
        <svg viewBox="0 0 10 12" className="w-[10px] h-[12px] block" fill="none" stroke="#666"><ellipse cx="5" cy="2.500" rx="4" ry="1.800" /><path d="M1 2.500v7c0 1 1.800 1.800 4 1.800s4-.8 4-1.800v-7M1 5.500c0 1 1.800 1.800 4 1.800s4-.8 4-1.800" /></svg>
        <span className="ml-[6px]">Data Source</span>
      </div>
      <div className="w-[63px] bg-white flex items-center justify-center font-bold text-[#333]">Sheet 1</div>
      {tabs.map(([name, w]) => (
        <div key={name} className={`${w} border-r border-[#d2d2d2] flex items-center justify-center whitespace-nowrap`}>{name}</div>
      ))}
      {[
        <path key="a" d="M2 2h14v15H2M6 12v-3M9 12V6M12 12V9" />,
        <path key="b" d="M2 2h14v15H2zM2 9h14M9 2v15" />,
        <path key="c" d="M2 3l6 -1 0 15-6 1zM8 2l8 1v14" />,
      ].map((p, i) => (
        <div key={i} className="w-[35.500px] border-r border-[#d2d2d2] flex items-center justify-center">
          <svg viewBox="0 0 24 24" className="w-[20px] h-[20px] block" fill="none" stroke="#666" strokeWidth="1.200">
            {p}
            <path d="M18 13v9M13.500 17.500h9" stroke="#444" strokeWidth="2" />
          </svg>
        </div>
      ))}
    </div>
  );
}

function StatusBar() {
  return (
    <div className="h-[23px] shrink-0 flex items-center bg-[#efefef] text-[12px] text-[#444] whitespace-nowrap">
      <span className="ml-[14px] w-[80px]">4567 marks</span>
      <span className="w-[131px]">1 row by 270 columns</span>
      <span className="w-[958px]">SUM(Number of Records): 45,716</span>
      <div className="w-[141px] h-full border-l border-[#dcdcdc]" />
      <div className="w-[30px] h-full border-l border-[#dcdcdc]" />
      <div className="w-[30px] h-full border-l border-[#dcdcdc]" />
      <div className="w-[52px] h-full border-l border-[#dcdcdc]" />
      <div className="flex-1 h-full border-l border-[#dcdcdc] flex items-center pl-[9px]">
        <svg viewBox="0 0 62 10" className="w-[62px] h-[10px] block shrink-0" fill="#c4c4c4">
          <path d="M0 0h1.500v10H0zM9 0v10L3 5zM27 0v10l-5-5zM38 0v10l5-5zM53 0v10l5-5zM60 0h1.500v10H60z" />
        </svg>
        <div className="w-px h-full bg-[#dcdcdc] ml-[7px] shrink-0" />
        <div className="ml-[9px] grid grid-cols-3 gap-px w-[13px] shrink-0">
          {Array.from({ length: 9 }, (_, i) => <div key={i} className="h-[3px] bg-[#b5b5b5]" />)}
        </div>
        <div className="ml-[10px] w-[13px] h-[12px] bg-[#b5b5b5] shrink-0" />
        <div className="ml-[10px] w-[12px] h-[13px] bg-[#666] shrink-0" />
      </div>
    </div>
  );
}

export default function App() {
  return (
    <div className="relative w-[1600px] h-[1000px] overflow-hidden flex flex-col bg-[#f3f3f3] text-[#333] font-['Lato',sans-serif]">
      <Toolbar />
      <div className="flex-1 flex min-h-0">
        <DataPane />
        <CardsColumn />
        <Center />
      </div>
      <SheetTabs />
      <StatusBar />
      <ShowMePanel />
    </div>
  );
}
